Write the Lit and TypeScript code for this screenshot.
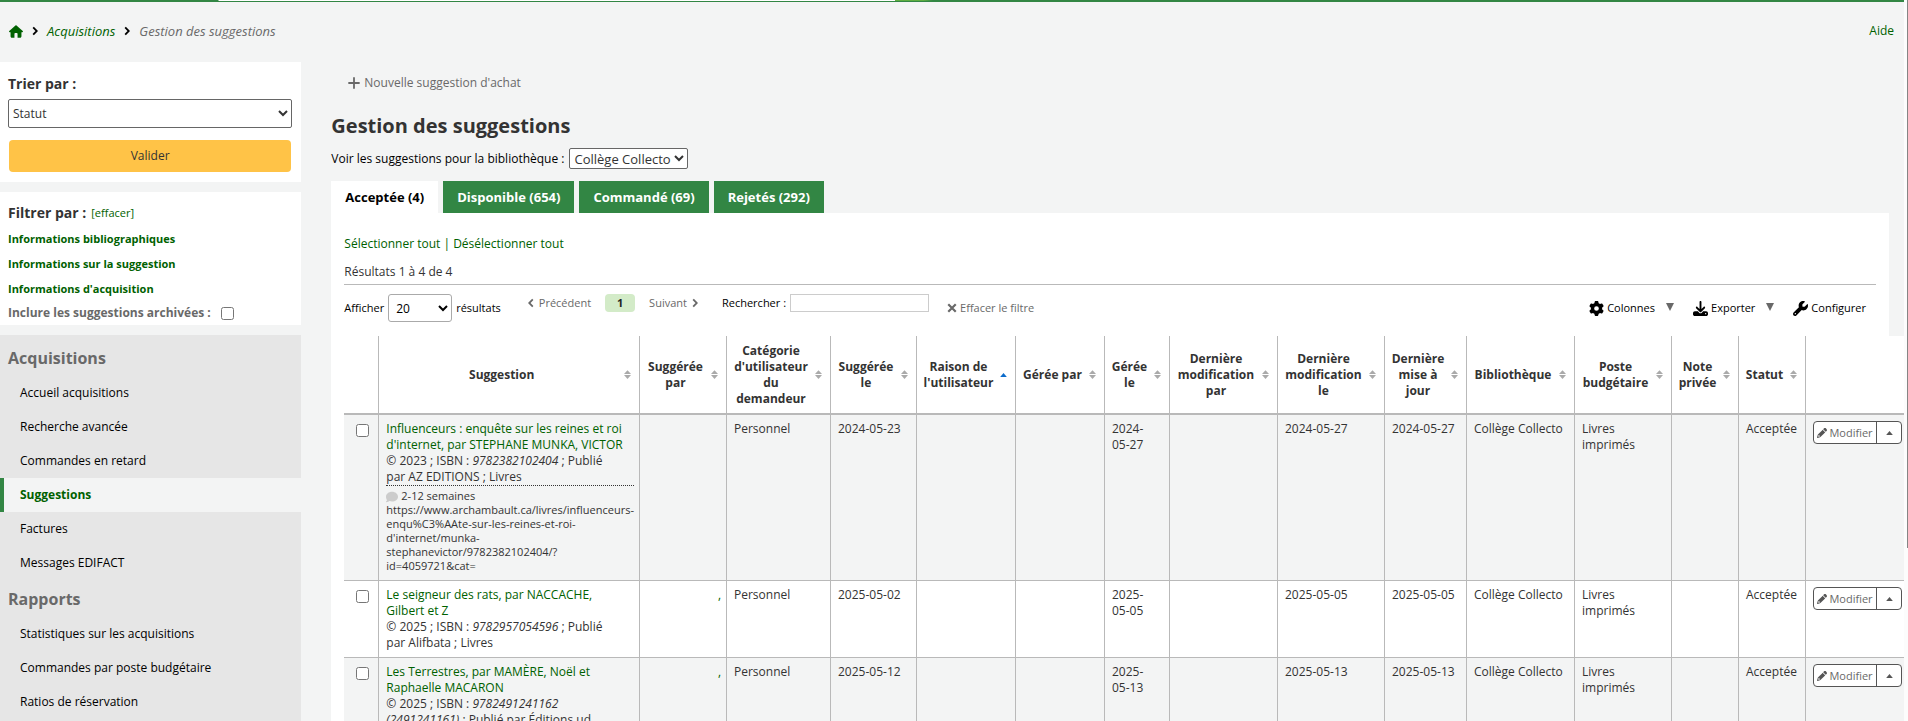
import { LitElement, html, css, svg, nothing } from "lit";
import { customElement, property } from "lit/decorators.js";
import { classMap } from "lit/directives/class-map.js";

interface Column {
  label: string;
  cls: string;
  sorted?: boolean;
}

interface Suggestion {
  title: string;
  year: string;
  isbn: string;
  rest: string;
  note?: string[];
  suggester: string;
  suggestedOn: string;
  managedOn: string;
  modifiedOn: string;
  updatedOn: string;
}

const COLUMNS: Column[] = [
  { label: "Suggestion", cls: "c-title" },
  { label: "Suggérée\npar", cls: "c-by" },
  { label: "Catégorie\nd'utilisateur\ndu\ndemandeur", cls: "c-category" },
  { label: "Suggérée\nle", cls: "c-on" },
  { label: "Raison de\nl'utilisateur", cls: "c-reason", sorted: true },
  { label: "Gérée par", cls: "c-manager" },
  { label: "Gérée\nle", cls: "c-managed" },
  { label: "Dernière\nmodification\npar", cls: "c-modby" },
  { label: "Dernière\nmodification\nle", cls: "c-modon" },
  { label: "Dernière\nmise à\njour", cls: "c-updated" },
  { label: "Bibliothèque", cls: "c-library" },
  { label: "Poste\nbudgétaire", cls: "c-fund" },
  { label: "Note\nprivée", cls: "c-note" },
  { label: "Statut", cls: "c-status" },
];

const ROWS: Suggestion[] = [
  {
    title: "Influenceurs : enquête sur les reines et roi d'internet, par STEPHANE MUNKA, VICTOR",
    year: "2023",
    isbn: "9782382102404",
    rest: "Publié par\u00a0AZ EDITIONS ; Livres",
    note: [
      "2-12 semaines",
      "https://www.archambault.ca/livres/influenceurs-",
      "enqu%C3%AAte-sur-les-reines-et-roi-",
      "d'internet/munka-",
      "stephanevictor/9782382102404/?",
      "id=4059721&cat=",
    ],
    suggester: "",
    suggestedOn: "2024-05-23",
    managedOn: "2024-05-27",
    modifiedOn: "2024-05-27",
    updatedOn: "2024-05-27",
  },
  {
    title: "Le seigneur des rats, par NACCACHE, Gilbert\u00a0et Z",
    year: "2025",
    isbn: "9782957054596",
    rest: "Publié par\u00a0Alifbata ; Livres",
    suggester: ",",
    suggestedOn: "2025-05-02",
    managedOn: "2025-05-05",
    modifiedOn: "2025-05-05",
    updatedOn: "2025-05-05",
  },
  {
    title: "Les Terrestres, par MAMÈRE, Noël et Raphaelle MACARON",
    year: "2025",
    isbn: "9782491241162 (2491241161)",
    rest: "Publié par Éditions ud",
    suggester: ",",
    suggestedOn: "2025-05-12",
    managedOn: "2025-05-13",
    modifiedOn: "2025-05-13",
    updatedOn: "2025-05-13",
  },
];

const ICONS: Record<string, { box: string; art: unknown }> = {
  home: {
    box: "0 0 576 512",
    art: svg`<path d="M575.8 255.500c0 18-15 32.100-32 32.100h-32l.7 160.200c0 35.300-21.500 64.200-56.500 64.200H352V352c0-17.700-14.300-32-32-32h-64c-17.700 0-32 14.300-32 32v160h-104c-35 0-56-28.700-56-64V287.600H32c-18 0-32-14-32-32.100 0-9 3-17 10-24L266.400 8c7-7 15-8 22-8s15 2 21 7l255.400 224.500c8 7 12 15 11 24z"/>`,
  },
  right: {
    box: "0 0 10 16",
    art: svg`<path d="M2 2l6 6-6 6" fill="none" stroke="currentColor" stroke-width="3"/>`,
  },
  left: {
    box: "0 0 10 16",
    art: svg`<path d="M8 2L2 8l6 6" fill="none" stroke="currentColor" stroke-width="3"/>`,
  },
  plus: {
    box: "0 0 12 12",
    art: svg`<path d="M6 1v10M1 6h10" fill="none" stroke="currentColor" stroke-width="1.800" stroke-linecap="round"/>`,
  },
  cross: {
    box: "0 0 12 12",
    art: svg`<path d="M1.500 1.500l9 9M10.500 1.500l-9 9" fill="none" stroke="currentColor" stroke-width="2.600"/>`,
  },
  gear: {
    box: "0 0 512 512",
    art: svg`<path d="M495.900 166.600c3.200 8.700.5 18.400-6.400 24.600l-43.300 39.400c1.100 8.300 1.700 16.800 1.700 25.400s-.6 17.100-1.700 25.400l43.300 39.400c6.900 6.200 9.600 15.900 6.400 24.600-4.400 11.900-9.700 23.300-15.800 34.300l-4.700 8.100c-6.600 11-14 21.400-22.100 31.200-5.900 7.200-15.700 9.600-24.500 6.800l-55.700-17.700c-13.400 10.300-28.200 18.900-44 25.400l-12.500 57.100c-2 9.100-9 16.300-18.200 17.800-13.800 2.300-28 3.500-42.500 3.500s-28.700-1.200-42.500-3.500c-9.200-1.500-16.200-8.700-18.200-17.800l-12.500-57.100c-15.800-6.500-30.600-15.100-44-25.400l-55.600 17.800c-8.800 2.800-18.600.3-24.500-6.800-8.100-9.800-15.500-20.200-22.100-31.200l-4.700-8.100c-6.100-11-11.400-22.400-15.800-34.300-3.200-8.700-.5-18.400 6.400-24.600l43.300-39.400C64.600 273.100 64 264.600 64 256s.6-17.100 1.700-25.400l-43.300-39.400c-6.900-6.200-9.600-15.900-6.400-24.600 4.400-11.900 9.700-23.300 15.800-34.300l4.700-8.100c6.600-11 14-21.400 22.100-31.200 5.900-7.200 15.700-9.600 24.500-6.800l55.700 17.700c13.400-10.300 28.200-18.900 44-25.400l12.500-57.100c2-9.100 9-16.300 18.200-17.800C227.300 1.200 241.500 0 256 0s28.700 1.200 42.500 3.500c9.200 1.500 16.200 8.700 18.200 17.800l12.500 57.100c15.800 6.500 30.600 15.100 44 25.400l55.700-17.700c8.800-2.800 18.600-.3 24.500 6.800 8.100 9.800 15.500 20.200 22.100 31.200l4.700 8.100c6.100 11 11.400 22.400 15.800 34.300zM256 336a80 80 0 1 0 0-160 80 80 0 1 0 0 160z"/>`,
  },
  download: {
    box: "0 0 512 512",
    art: svg`<path d="M288 32c0-17.700-14.300-32-32-32s-32 14.300-32 32v242.700l-73.400-73.400c-12.500-12.500-32.800-12.500-45.300 0s-12.500 32.800 0 45.300l128 128c12.500 12.500 32.800 12.500 45.300 0l128-128c12.500-12.500 12.500-32.800 0-45.300s-32.800-12.500-45.300 0L288 274.700V32zM64 352c-35.300 0-64 28.700-64 64v32c0 35.300 28.700 64 64 64h384c35.300 0 64-28.700 64-64v-32c0-35.300-28.700-64-64-64H346.500l-45.300 45.300c-25 25-65.500 25-90.500 0L165.500 352H64zm368 56a24 24 0 1 1 0 48 24 24 0 1 1 0-48z"/>`,
  },
  wrench: {
    box: "0 0 512 512",
    art: svg`<path d="M352 320c88.400 0 160-71.600 160-160 0-15.300-2.200-30.100-6.200-44.200-3.100-10.800-16.400-13.200-24.300-5.300l-76.800 76.800c-3 3-7.100 4.700-11.300 4.700H336c-8.800 0-16-7.200-16-16v-57.400c0-4.200 1.700-8.300 4.700-11.300l76.800-76.800c7.900-7.900 5.400-21.200-5.300-24.300C382.100 2.200 367.300 0 352 0 263.600 0 192 71.600 192 160c0 19.100 3.400 37.500 9.500 54.500L19.900 396.100C7.200 408.800 0 426.100 0 444.100 0 481.600 30.400 512 67.900 512c18 0 35.300-7.200 48-19.900l181.600-181.600c17 6.200 35.400 9.500 54.500 9.500zM80 408a24 24 0 1 1 0 48 24 24 0 1 1 0-48z"/>`,
  },
  pencil: {
    box: "0 0 512 512",
    art: svg`<path d="M410.300 231l11.300-11.300-33.900-33.900-62.100-62.100-33.900-33.900-11.300 11.300-22.600 22.600L58.600 322.900c-10.400 10.400-18 23.300-22.200 37.400L1 480.700c-2.500 8.400-.2 17.500 6.100 23.700s15.300 8.500 23.700 6.100l120.300-35.400c14.100-4.200 27-11.800 37.400-22.200l199.200-199.200zM160 399.400l-9.100 22.700c-4 3.100-8.500 5.400-13.300 6.900L59.400 452l23-78.100c1.400-4.900 3.800-9.400 6.900-13.300l22.700-9.100v32c0 8.800 7.200 16 16 16zM362.700 18.700l-48.300 48.300 130.500 130.600 48.400-48.300c25-25 25-65.500 0-90.500l-39.400-40.100c-25-25-65.500-25-91.200 0z"/>`,
  },
  comment: {
    box: "0 0 512 512",
    art: svg`<path d="M512 240c0 114.900-114.600 208-256 208-37.100 0-72.300-6.400-104.100-17.900-11.900 8.700-31.300 20.600-54.300 30.600C73.600 471.100 44.700 480 16 480c-6.500 0-12.300-3.900-14.800-9.900s-1.100-12.800 3.400-17.400c10.400-11.400 32-42 40.200-70.800C17.200 348.200 0 296.200 0 240 0 125.100 114.600 32 256 32s256 93.100 256 208z"/>`,
  },
  down: { box: "0 0 10 10", art: svg`<path d="M0 0h10L5 10z"/>` },
  up: { box: "0 0 10 6", art: svg`<path d="M0 6h10L5 0z"/>` },
  sort: { box: "0 0 8 10", art: svg`<path d="M0 4.500h8L4 0zM0 5.500h8L4 10z"/>` },
};

const base = css`
  * {
    box-sizing: border-box;
  }
  a {
    color: #006100;
    text-decoration: none;
  }
  button,
  input,
  select {
    font: inherit;
    margin: 0;
  }
  button {
    padding: 0;
    border: 0;
    background: none;
    color: inherit;
    cursor: pointer;
  }
  input[type="checkbox"] {
    display: block;
    width: 13px;
    height: 13px;
  }
`;

@customElement("ui-icon")
export class UiIcon extends LitElement {
  @property() name = "";

  static styles = css`
    :host {
      display: inline-flex;
      flex: none;
      width: 12px;
      height: 12px;
    }
    svg {
      width: 100%;
      height: 100%;
      fill: currentColor;
    }
  `;

  render() {
    const icon = ICONS[this.name];
    return icon ? html`<svg viewBox=${icon.box} aria-hidden="true">${icon.art}</svg>` : nothing;
  }
}

@customElement("side-panel")
export class SidePanel extends LitElement {
  static styles = [
    base,
    css`
      :host {
        display: flex;
        flex-direction: column;
        gap: 10px;
      }
      .card {
        background: #fff;
        padding: 10px 8px 8px;
      }
      h2 {
        margin: 0;
        font-size: 14px;
        line-height: 22px;
        color: #333;
      }
      .card.sort {
        display: flex;
        flex-direction: column;
        padding: 11px 9px 10px 8px;
      }
      .sort select {
        height: 29px;
        margin: 4px 0 12px;
        padding: 0;
        border: 1px solid #666;
        border-radius: 2px;
        background: #fff;
        color: #333;
      }
      .sort button {
        height: 32px;
        margin: 0 1px;
        border-radius: 4px;
        background: #ffc347;
        color: #333;
      }
      .head {
        display: flex;
        align-items: center;
        gap: 5px;
      }
      .head a {
        font-size: 11px;
      }
      .links {
        display: flex;
        flex-direction: column;
        font-size: 11px;
        font-weight: 700;
        line-height: 25px;
        margin-top: 2px;
      }
      .archived {
        display: flex;
        align-items: center;
        gap: 10px;
        line-height: 24px;
        font-weight: 700;
        color: #696969;
      }
      .card.filter {
        padding-bottom: 0;
      }
      .menu {
        background: #e6e6e6;
        padding-top: 11px;
      }
      .menu h3 {
        margin: 0;
        padding-left: 8px;
        font-size: 16px;
        line-height: 24px;
        color: #696969;
      }
      ul {
        margin: 0 0 7px;
        padding: 6px 0 0;
        list-style: none;
      }
      li a {
        display: block;
        padding-left: 16px;
        border-left: 4px solid transparent;
        line-height: 34px;
        color: #000;
      }
      li a.current {
        border-left-color: #328644;
        background: #f3f4f4;
        color: #006100;
        font-weight: 700;
      }
    `,
  ];

  private menu(title: string, items: string[]) {
    return html`<h3>${title}</h3>
      <ul>
        ${items.map(
          (t) => html`<li><a href="#" class=${classMap({ current: t === "Suggestions" })}>${t}</a></li>`,
        )}
      </ul>`;
  }

  render() {
    return html`
      <form class="card sort" @submit=${(e: Event) => e.preventDefault()}>
        <h2><label for="sort">Trier par :</label></h2>
        <select id="sort"><option>Statut</option><option>Bibliothèque</option></select>
        <button type="submit">Valider</button>
      </form>
      <section class="card filter">
        <div class="head"><h2>Filtrer par :</h2><a href="#">[effacer]</a></div>
        <div class="links">
          <a href="#">Informations bibliographiques</a>
          <a href="#">Informations sur la suggestion</a>
          <a href="#">Informations d'acquisition</a>
        </div>
        <div class="archived">
          <label for="archived">Inclure les suggestions archivées :</label>
          <input id="archived" type="checkbox" />
        </div>
      </section>
      <nav class="menu">
        ${this.menu("Acquisitions", [
          "Accueil acquisitions",
          "Recherche avancée",
          "Commandes en retard",
          "Suggestions",
          "Factures",
          "Messages EDIFACT",
        ])}
        ${this.menu("Rapports", [
          "Statistiques sur les acquisitions",
          "Commandes par poste budgétaire",
          "Ratios de réservation",
        ])}
      </nav>
    `;
  }
}

@customElement("suggestion-table")
export class SuggestionTable extends LitElement {
  static styles = [
    base,
    css`
      :host {
        display: block;
      }
      table {
        width: 100%;
        table-layout: fixed;
        border-collapse: separate;
        border-spacing: 0;
        background: #fff;
        color: #333;
        line-height: 16px;
      }
      .c-check { width: 35px; }
      .c-by { width: 87px; }
      .c-category { width: 104px; }
      .c-on { width: 86px; }
      .c-reason { width: 99px; }
      .c-manager { width: 89px; }
      .c-managed { width: 65px; }
      .c-modby { width: 108px; }
      .c-modon { width: 107px; }
      .c-updated { width: 82px; }
      .c-library { width: 108px; }
      .c-fund { width: 97px; }
      .c-note { width: 67px; }
      .c-status { width: 67px; }
      .c-actions { width: 103px; }
      th,
      td {
        padding: 6px 5px 6px 7px;
        border-right: 1px solid #b9b9b9;
        border-bottom: 1px solid #b9b9b9;
        text-align: left;
        vertical-align: top;
      }
      th {
        height: 79px;
        padding: 0 8px 0 5px;
        border-bottom-width: 2px;
        vertical-align: middle;
      }
      th:last-child,
      td:last-child {
        border-right: 0;
      }
      th button {
        display: flex;
        align-items: center;
        gap: 5px;
        width: 100%;
        font-weight: 700;
      }
      th span {
        flex: 1;
        white-space: pre;
        text-align: center;
      }
      th ui-icon {
        width: 7px;
        height: 9px;
        color: #aaa;
      }
      th ui-icon.sorted {
        height: 4px;
        color: #0b6bcb;
      }
      tbody tr:nth-child(odd) td {
        background: #f3f4f4;
      }
      td.check {
        padding: 9px 0 0 12px;
      }
      td.right {
        text-align: right;
        color: #006100;
      }
      td.date {
        white-space: nowrap;
      }
      td.wrap {
        padding-right: 20px;
      }
      .note {
        border-top: 1px dotted #333;
        padding: 3px 0 1px;
        font-size: 11px;
        line-height: 14px;
        white-space: nowrap;
      }
      .note ui-icon {
        margin-right: 3px;
        vertical-align: middle;
        color: #ccc;
      }
      .split {
        display: flex;
        width: 89px;
        height: 23px;
        border: 1px solid #555;
        border-radius: 4px;
        background: #fff;
        color: #696969;
        font-size: 11px;
      }
      .split button {
        display: flex;
        align-items: center;
        justify-content: center;
      }
      .edit {
        flex: 1;
        gap: 2px;
      }
      .edit ui-icon {
        width: 10px;
        height: 10px;
        color: #555;
      }
      .split .more {
        width: 25px;
        border-left: 1px solid #555;
        color: #555;
      }
      .more ui-icon {
        width: 7px;
        height: 4px;
      }
    `,
  ];

  private row(r: Suggestion) {
    return html`<tr>
      <td class="check"><input type="checkbox" aria-label=${r.title} /></td>
      <td>
        <a href="#">${r.title}</a><br />© ${r.year} ; ISBN : <i>${r.isbn}</i> ; ${r.rest}
        ${r.note
          ? html`<div class="note">
              <ui-icon name="comment"></ui-icon>${r.note.map((l, i) => (i ? html`<br />${l}` : l))}
            </div>`
          : nothing}
      </td>
      <td class="right">${r.suggester}</td>
      <td>Personnel</td>
      <td class="date">${r.suggestedOn}</td>
      <td></td>
      <td></td>
      <td class="wrap">${r.managedOn}</td>
      <td></td>
      <td class="date">${r.modifiedOn}</td>
      <td class="date">${r.updatedOn}</td>
      <td class="date">Collège Collecto</td>
      <td class="wrap">Livres imprimés</td>
      <td></td>
      <td>Acceptée</td>
      <td>
        <div class="split">
          <button class="edit"><ui-icon name="pencil"></ui-icon>Modifier</button>
          <button class="more" aria-label="Plus"><ui-icon name="up"></ui-icon></button>
        </div>
      </td>
    </tr>`;
  }

  render() {
    return html`<table>
      <thead>
        <tr>
          <th class="c-check"></th>
          ${COLUMNS.map(
            (c) => html`<th class=${c.cls}>
              <button>
                <span>${c.label}</span
                ><ui-icon class=${classMap({ sorted: !!c.sorted })} name=${c.sorted ? "up" : "sort"}></ui-icon>
              </button>
            </th>`,
          )}
          <th class="c-actions"></th>
        </tr>
      </thead>
      <tbody>
        ${ROWS.map((r) => this.row(r))}
      </tbody>
    </table>`;
  }
}

@customElement("app-root")
export class AppRoot extends LitElement {
  static styles = [
    base,
    css`
      :host {
        display: flex;
        height: 100vh;
        overflow: hidden;
        background: #f3f4f4;
        color: #000;
        font-family: "Open Sans", "Noto Sans", sans-serif;
        font-size: 12px;
        line-height: 16px;
      }
      .page {
        flex: 1;
        min-width: 0;
        overflow: hidden;
      }
      .rail {
        width: 4px;
        padding-left: 3px;
        background: #fcfcfc;
      }
      .thumb {
        height: 76%;
        background: #858585;
      }
      .strip {
        height: 2px;
        border-bottom: 1px solid #328644;
        background: linear-gradient(
          to right,
          #328644 218px,
          #fff 219px,
          #fff 47%,
          #5fad41 47%,
          #5fad41 48.500%,
          #328644 49%
        );
      }
      .crumbs {
        display: flex;
        align-items: center;
        height: 60px;
        padding: 0 10px 2px 9px;
        font-size: 13px;
        font-style: italic;
      }
      .crumbs a {
        display: flex;
      }
      .crumbs .chev {
        width: 6px;
        height: 10px;
        margin: 0 9px;
      }
      .crumbs .home {
        width: 14px;
        height: 13px;
      }
      .crumbs .here {
        color: #696969;
      }
      .crumbs .help {
        margin-left: auto;
        font-size: 12px;
        font-style: normal;
      }
      .columns {
        display: flex;
      }
      side-panel {
        width: 16.6667%;
        padding-right: 16px;
      }
      main {
        flex: 1;
        min-width: 0;
        padding: 11px 15px 0 14px;
      }
      .new {
        display: flex;
        align-items: center;
        gap: 4px;
        padding: 2px 17px;
        color: #696969;
      }
      h1 {
        margin: 19px 0 8px;
        font-size: 20px;
        line-height: 28px;
        color: #333;
      }
      .library {
        display: flex;
        align-items: center;
        gap: 5px;
        margin-bottom: 12px;
      }
      .library select {
        height: 21px;
        padding: 0;
        border: 1px solid #666;
        border-radius: 2px;
        background: #fff;
        color: #333;
        font-size: 13px;
      }
      .tabs {
        display: flex;
        gap: 5px;
      }
      .tabs button {
        height: 32px;
        padding: 0 14px;
        background: #328644;
        color: #fff;
        font-size: 13px;
        font-weight: 700;
      }
      .tabs .current {
        background: #fff;
        color: #000;
      }
      .panel {
        padding: 23px 13px 20px;
        background: #fff;
      }
      .results {
        margin-top: 12px;
        padding-bottom: 4px;
        border-bottom: 1px solid #b9b9b9;
        color: #333;
      }
      .toolbar {
        display: flex;
        align-items: flex-start;
        height: 51px;
        padding: 9px 10px 0 0;
        font-size: 11px;
      }
      .toolbar .size {
        display: flex;
        align-items: center;
        gap: 4px;
      }
      .size select {
        width: 64px;
        height: 28px;
        padding: 0 3px;
        border: 1px solid #aaa;
        border-radius: 3px;
        background: #fff;
        font-size: 12px;
      }
      .pager {
        display: flex;
        align-items: center;
        gap: 14px;
        margin: 0 24px 0 27px;
        height: 18px;
        color: #696969;
      }
      .pager button {
        display: flex;
        align-items: center;
        gap: 5px;
      }
      .pager ui-icon {
        width: 6px;
        height: 10px;
      }
      .pager .num {
        justify-content: center;
        width: 30px;
        height: 18px;
        border-radius: 4px;
        background: #d3ebc8;
        color: #222;
        font-weight: 700;
      }
      .search {
        display: flex;
        align-items: center;
        gap: 4px;
      }
      .search input {
        width: 139px;
        height: 18px;
        padding: 0 4px;
        border: 1px solid #ccc;
      }
      .tool {
        display: flex;
        align-items: center;
        gap: 3px;
        height: 28px;
      }
      .clear {
        margin-left: 18px;
        color: #696969;
      }
      .clear ui-icon {
        width: 10px;
        height: 10px;
      }
      .tools {
        display: flex;
        gap: 19px;
        margin-left: auto;
      }
      .tools ui-icon {
        width: 15px;
        height: 15px;
      }
      .tools .caret {
        width: 8px;
        height: 8px;
        margin: 0 0 3px 8px;
        color: #696969;
      }
      suggestion-table {
        margin-right: -33px;
      }
    `,
  ];

  render() {
    return html`
      <div class="page">
        <div class="strip"></div>
        <nav class="crumbs">
          <a href="#" aria-label="Accueil"><ui-icon class="home" name="home"></ui-icon></a>
          <ui-icon class="chev" name="right"></ui-icon>
          <a href="#">Acquisitions</a>
          <ui-icon class="chev" name="right"></ui-icon>
          <span class="here">Gestion des suggestions</span>
          <a class="help" href="#">Aide</a>
        </nav>
        <div class="columns">
          <side-panel></side-panel>
          <main>
            <button class="new"><ui-icon name="plus"></ui-icon>Nouvelle suggestion d'achat</button>
            <h1>Gestion des suggestions</h1>
            <div class="library">
              <label for="library">Voir les suggestions pour la bibliothèque :</label>
              <select id="library"><option>Collège Collecto</option></select>
            </div>
            <div class="tabs" role="tablist">
              ${["Acceptée (4)", "Disponible (654)", "Commandé (69)", "Rejetés (292)"].map(
                (t, i) =>
                  html`<button role="tab" aria-selected=${i === 0} class=${classMap({ current: i === 0 })}>${t}</button>`,
              )}
            </div>
            <div class="panel">
              <div><a href="#">Sélectionner tout</a> <a href="#">|</a> <a href="#">Désélectionner tout</a></div>
              <div class="results">Résultats 1 à 4 de 4</div>
              <div class="toolbar">
                <div class="size">
                  <label for="size">Afficher</label>
                  <select id="size"><option>20</option><option>50</option></select>
                  <span>résultats</span>
                </div>
                <div class="pager">
                  <button><ui-icon name="left"></ui-icon>Précédent</button>
                  <button class="num">1</button>
                  <button>Suivant<ui-icon name="right"></ui-icon></button>
                </div>
                <div class="search">
                  <label for="search">Rechercher :</label>
                  <input id="search" type="text" />
                </div>
                <button class="tool clear"><ui-icon name="cross"></ui-icon>Effacer le filtre</button>
                <div class="tools">
                  <button class="tool">
                    <ui-icon name="gear"></ui-icon>Colonnes<ui-icon class="caret" name="down"></ui-icon>
                  </button>
                  <button class="tool">
                    <ui-icon name="download"></ui-icon>Exporter<ui-icon class="caret" name="down"></ui-icon>
                  </button>
                  <button class="tool"><ui-icon name="wrench"></ui-icon>Configurer</button>
                </div>
              </div>
              <suggestion-table></suggestion-table>
            </div>
          </main>
        </div>
      </div>
      <div class="rail"><div class="thumb"></div></div>
    `;
  }
}
